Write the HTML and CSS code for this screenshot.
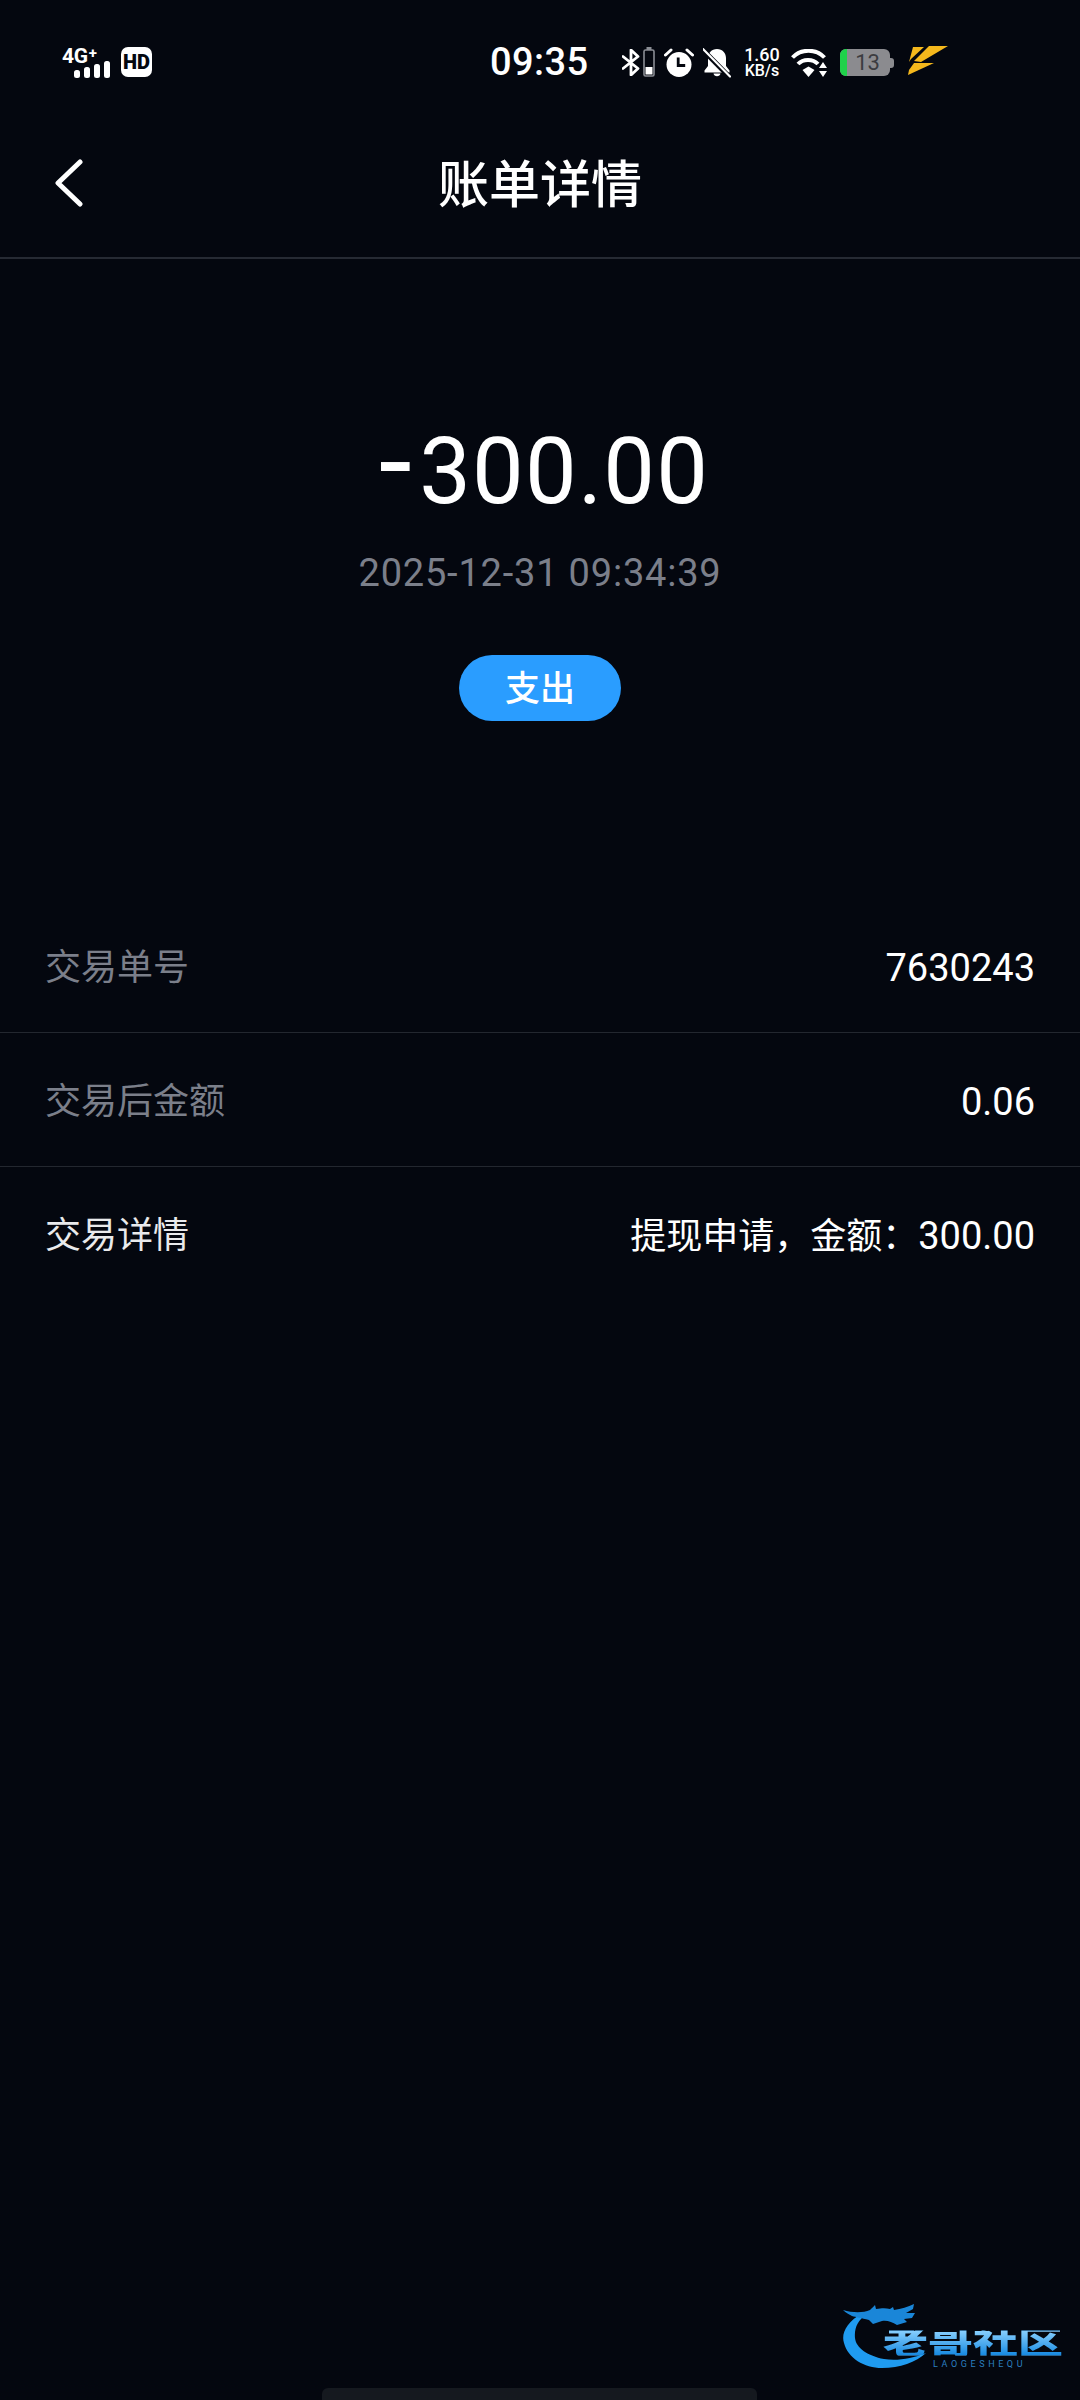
FILE: index.html
```html
<!DOCTYPE html>
<html lang="zh-CN">
<head>
<meta charset="utf-8">
<title>账单详情</title>
<link rel="stylesheet" href="styles.css">
</head>
<body>
<div class="page">
  <div class="statusbar">
    <div class="net">
      <div class="net-label">4G<span class="plus">+</span></div>
      <svg class="signal" viewBox="0 0 36 17" width="36" height="17"><rect x="0" y="9" width="6" height="8" rx="2.5"/><rect x="10" y="6" width="6" height="11" rx="2.5"/><rect x="20" y="3" width="6" height="14" rx="2.5"/><rect x="30" y="0" width="6" height="17" rx="2.5"/></svg>
    </div>
    <div class="hd">HD</div>
    <div class="time">09:35</div>
    <svg class="ic-bt" viewBox="0 0 18 27" width="18" height="27"><path d="M1 7.500 16 19.500 9 26V1l7 6.500L1 19.500" fill="none" stroke="#fff" stroke-width="2.800" stroke-linejoin="round" stroke-linecap="round"/></svg>
    <svg class="ic-minibat" viewBox="0 0 12 30" width="12" height="30"><rect class="mb-cap" x="3.500" y="0" width="5" height="3"/><rect class="mb-body" x="1" y="3" width="10" height="26" rx="1.500"/><rect x="2.500" y="20" width="7" height="7.500"/></svg>
    <svg class="ic-alarm" viewBox="0 0 30 30" width="30" height="30"><circle cx="15" cy="16.500" r="12.500" fill="#fff"/><path d="M14.200 9.500v8h7" fill="none" stroke="#04070f" stroke-width="2.800"/><path d="M1.500 7 7 2M28.500 7 23 2" stroke="#fff" stroke-width="3" stroke-linecap="round"/></svg>
    <svg class="ic-bell" viewBox="0 0 28 30" width="28" height="30"><path d="M14 1c-5.500 0-9 4-9 9v8l-3.500 4.500v2h25v-2L23 18v-8c0-5-3.500-9-9-9Z" fill="#fff"/><path d="M10.500 25.500a3.600 3.600 0 0 0 7 0Z" fill="#fff"/><path d="M-1 1 27 29.500" stroke="#04070f" stroke-width="5"/><path d="M0 1 27 28.500" stroke="#fff" stroke-width="2.200" stroke-linecap="round"/></svg>
    <div class="speed"><span>1.60</span><span class="speed-unit">KB/s</span></div>
    <svg class="ic-wifi" viewBox="0 0 37 28" width="37" height="28"><path d="M1.500 8.500C10 -0.500 25 -0.500 33.500 8.500" fill="none" stroke="#fff" stroke-width="4"/><path d="M7 15C12 9.500 22 9.500 27 15" fill="none" stroke="#fff" stroke-width="4"/><path d="M11.500 21l6-3.500 6 3.500-6 7Z" fill="#fff"/><path d="M32 13l4 6h-8ZM32 28l-4-6h8Z" fill="#fff"/></svg>
    <div class="battery">
      <div class="battery-body"><span class="battery-fill"></span><span class="battery-num">13</span></div>
      <span class="battery-cap"></span>
    </div>
    <svg class="ic-bolt" viewBox="0 0 43 30" width="43" height="30"><path d="M7 1h11L5 13l-2 3Z" fill="#f5b81c"/><path d="M23 0h19L15 16 8 15Z" fill="#f5b81c"/><path d="M8 17h20L2 29l1-5Z" fill="#f5b81c"/></svg>
  </div>

  <header class="navbar">
    <svg class="back" viewBox="0 0 28 48" width="28" height="48"><path d="M25 3 3 24l22 21" fill="none" stroke="#fff" stroke-width="5" stroke-linecap="round" stroke-linejoin="round"/></svg>
    <h1 class="title">账单详情</h1>
  </header>

  <section class="hero">
    <div class="amount"><span class="minus">-</span>300.00</div>
    <div class="date">2025-12-31 09:34:39</div>
    <div class="pill">支出</div>
  </section>

  <section class="rows">
    <div class="row"><span class="label">交易单号</span><span class="value num">7630243</span></div>
    <div class="row"><span class="label">交易后金额</span><span class="value num">0.06</span></div>
    <div class="row"><span class="label label-light">交易详情</span><span class="value">提现申请，金额：<span class="num">300.00</span></span></div>
  </section>

  <div class="watermark">
    <svg class="wm-art" viewBox="0 0 280 120" width="280" height="120">
      <path d="M63 33C46 42 41 54 44 63 48 78 64 88 82 88 100 88 116 82 126 73 112 79 96 81 84 79 68 76 56 68 55 58 54 48 58 40 66 35Z" fill="#1f9bf0"/>
      <path d="M43 30c10 3 20 3 27 0 2-2 4-4 5-5l1 4c6-1 10-1 14 0l3-2 1 3c7-1 14-3 20-6l-1 5-7 4 9 0-3 5-8 1 3 3-10 3c-5-3-10-5-15-4l-9 3-4-4c-8-2-13-3-17-4-3-2-6-3-9-6Z" fill="#1a86d8"/>
    </svg>
    <div class="wm-text">
      <span class="wm-cn">老哥社区</span>
      <span class="wm-en">LAOGESHEQU</span>
    </div>
  </div>

  <div class="homebar"></div>
</div>
</body>
</html>
```

FILE: styles.css
```css
* { box-sizing: border-box; }
html, body { margin: 0; padding: 0; }
body {
  background: #04070f;
  color: #fff;
  font-family: Roboto, "Noto Sans CJK SC", sans-serif;
  text-spacing-trim: space-all;
}
.page {
  position: relative;
  width: 1080px;
  height: 2400px;
  overflow: hidden;
  background: #04070f;
}

/* status bar */
.statusbar {
  height: 112px;
  padding: 46px 0 0 62px;
  display: flex;
  align-items: flex-start;
}
.statusbar svg { display: block; flex: none; }
.statusbar svg rect { fill: #fff; }
.net { width: 48px; }
.net-label {
  height: 15px;
  font-size: 21px;
  line-height: 15px;
  font-weight: 700;
  letter-spacing: -.3px;
}
.plus { font-size: 15px; vertical-align: 5px; margin-left: 1px; }
.signal { margin-left: 12px; }
.hd {
  width: 31px;
  height: 30px;
  margin: 1px 0 0 11px;
  border-radius: 7px;
  background: #fff;
  color: #04070f;
  font-size: 20px;
  font-weight: 900;
  line-height: 30px;
  text-align: center;
}
.time {
  width: 102px;
  margin: -5px 0 0 338px;
  font-size: 38px;
  line-height: 42px;
  font-weight: 500;
  letter-spacing: .4px;
}
.ic-bt { margin: 3px 0 0 30px; }
.ic-minibat { margin: 1px 0 0 3px; }
.statusbar .ic-minibat .mb-cap { fill: #8a8d94; }
.statusbar .ic-minibat .mb-body { fill: none; stroke: #8a8d94; stroke-width: 1.6px; }
.ic-alarm { margin: 2px 0 0 9px; }
.ic-bell { margin: 2px 0 0 9px; }
.speed {
  width: 36px;
  margin: 0 0 0 13px;
  display: flex;
  flex-direction: column;
  align-items: center;
  font-size: 18px;
  line-height: 17px;
  font-weight: 500;
}
.speed-unit { font-size: 16px; line-height: 15px; }
.ic-wifi { margin: 3px 0 0 11px; }
.battery {
  display: flex;
  align-items: center;
  height: 27px;
  margin: 3px 0 0 12px;
}
.battery-body {
  position: relative;
  width: 50px;
  height: 27px;
  border-radius: 6px;
  background: #8b8b8f;
  overflow: hidden;
  display: flex;
  align-items: center;
  justify-content: center;
}
.battery-fill {
  position: absolute;
  left: 0;
  top: 0;
  bottom: 0;
  width: 7px;
  background: #1fd14a;
}
.battery-num {
  margin-left: 5px;
  color: #3c3c40;
  font-size: 22px;
  line-height: 27px;
}
.battery-cap {
  width: 4px;
  height: 10px;
  border-radius: 0 3px 3px 0;
  background: #8b8b8f;
}
.ic-bolt { margin: 0 0 0 12px; }

/* nav */
.navbar {
  position: relative;
  height: 147px;
  border-bottom: 2px solid #262a33;
  display: flex;
  align-items: center;
  justify-content: center;
}
.back {
  position: absolute;
  left: 55px;
  top: 47px;
}
.title {
  margin: 0;
  font-size: 51px;
  line-height: 60px;
  font-weight: 500;
  position: relative;
  top: 1px;
}

/* hero */
.hero {
  padding-top: 158px;
  display: flex;
  flex-direction: column;
  align-items: center;
}
.amount {
  padding-left: 8px;
  font-size: 92px;
  line-height: 110px;
  letter-spacing: 1.200px;
  white-space: nowrap;
}
.minus {
  font-size: 120px;
  line-height: 0;
  margin-right: 6px;
}
.date {
  margin-top: 21px;
  font-size: 38px;
  line-height: 50px;
  color: #7b7f8a;
  letter-spacing: .8px;
}
.pill {
  width: 162px;
  height: 66px;
  margin-top: 57px;
  border-radius: 33px;
  background: #2a9dff;
  font-size: 35px;
  font-weight: 500;
  line-height: 70px;
  text-align: center;
}

/* rows */
.rows { margin-top: 178px; }
.row {
  height: 134px;
  padding: 4px 45px 0;
  display: flex;
  align-items: center;
  justify-content: space-between;
  border-bottom: 1px solid #23272f;
}
.row:last-child { border-bottom: 0; }
.label {
  font-size: 36px;
  line-height: 50px;
  color: #7b7f8a;
}
.label-light { color: #e9eaec; }
.value {
  font-size: 36px;
  line-height: 50px;
  color: #fff;
}
.num { font-size: 38px; }

/* watermark */
.watermark {
  position: absolute;
  left: 800px;
  top: 2280px;
  width: 280px;
  height: 120px;
}
.wm-art { position: absolute; left: 0; top: 0; filter: blur(.7px); }
.wm-text {
  position: absolute;
  left: 83px;
  top: 46px;
  display: flex;
  flex-direction: column;
}
.wm-cn {
  height: 34px;
  font-size: 45px;
  line-height: 34px;
  font-weight: 900;
  white-space: nowrap;
  transform: scaleY(.74);
  background: linear-gradient(#8ad0ff, #1588e0);
  -webkit-background-clip: text;
  background-clip: text;
  color: transparent;
  filter: blur(.6px);
}
.wm-en {
  margin: 0 0 0 50px;
  font-size: 9px;
  line-height: 9px;
  letter-spacing: 3.600px;
  color: #2b7fc0;
}

.homebar {
  position: absolute;
  left: 322px;
  bottom: 0;
  width: 435px;
  height: 12px;
  border-radius: 6px 6px 0 0;
  background: #15191f;
}
```
